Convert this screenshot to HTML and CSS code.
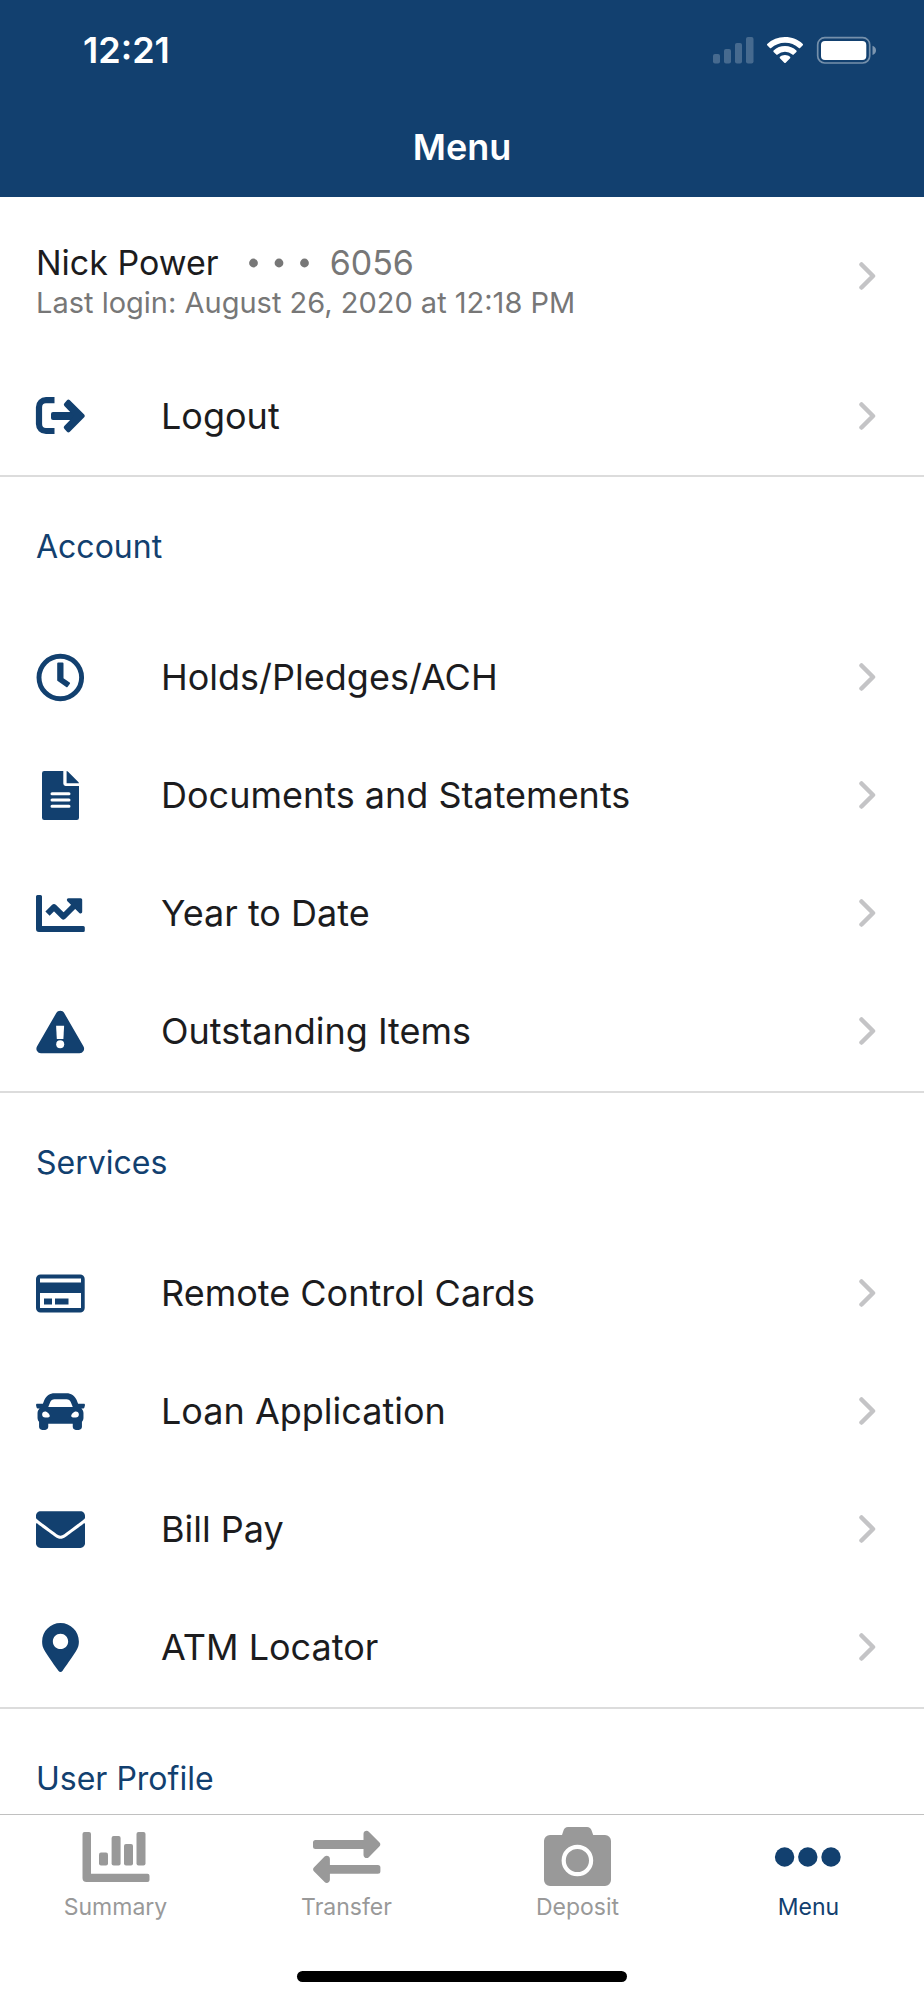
FILE: index.html
```html
<!DOCTYPE html>
<html lang="en">
<head>
<meta charset="utf-8">
<meta name="viewport" content="width=device-width, initial-scale=1">
<title>Menu</title>
<link rel="stylesheet" href="styles.css">
</head>
<body class="app">
<svg class="defs" aria-hidden="true">
  <symbol id="chevron" viewBox="0 0 17 28"><path d="M2.500 2.500 14 14 2.500 25.500" fill="none" stroke="currentColor" stroke-width="4.500" stroke-linecap="round" stroke-linejoin="round"/></symbol>
</svg>

<header class="header">
  <div class="status">
    <time class="clock">12:21</time>
    <svg class="status-icons" viewBox="23 16 163 28" aria-hidden="true" fill="#fff">
      <g opacity=".22"><rect x="23" y="34" width="7" height="9.500" rx="2"/><rect x="34" y="29" width="7" height="14.500" rx="2"/><rect x="45" y="23" width="7" height="20.500" rx="2"/><rect x="56" y="17" width="7.500" height="26.500" rx="2"/></g>
      <path d="M95 17c6.900 0 13.200 2.600 17.800 6.900.4.400.4 1 0 1.400l-2.700 2.700c-.4.400-.9.400-1.300 0A20.200 20.200 0 0 0 95 22.700c-5.300 0-10.100 2-13.800 5.300-.4.400-.9.400-1.300 0l-2.700-2.700c-.4-.4-.4-1 0-1.400A26 26 0 0 1 95 17zm0 9.100c4.400 0 8.400 1.700 11.400 4.400.4.400.4 1 0 1.400l-2.700 2.700c-.4.400-.9.400-1.300 0a11 11 0 0 0-14.800 0c-.4.400-.9.400-1.300 0l-2.700-2.700c-.4-.4-.4-1 0-1.400A17 17 0 0 1 95 26.100zm0 9c2 0 3.800.7 5.100 1.800.4.400.4.900 0 1.300l-4.400 4.500c-.4.400-1 .4-1.400 0l-4.400-4.500c-.4-.4-.4-.9 0-1.300 1.300-1.100 3.100-1.800 5.100-1.800z"/>
      <rect x="127.700" y="17.700" width="52" height="25.300" rx="7" fill="none" stroke="#fff" stroke-width="1.700" opacity=".42"/>
      <rect x="131" y="21" width="45.300" height="19" rx="4"/>
      <path d="M182.500 25.800c2.200.8 3.500 2.500 3.500 4.600s-1.300 3.800-3.500 4.600z" opacity=".45"/>
    </svg>
  </div>
  <h1 class="title">Menu</h1>
</header>

<main class="content">
  <section class="group">
    <a class="profile" href="#profile">
      <span class="profile-text">
        <span class="profile-name">Nick Power <span class="account-mask"><svg class="mask-dots" viewBox="0 0 60 10" role="img" aria-label="ending in"><g fill="currentColor"><circle cx="4.500" cy="5" r="4.400"/><circle cx="30" cy="5" r="4.400"/><circle cx="55.500" cy="5" r="4.400"/></g></svg>6056</span></span>
        <span class="last-login">Last login: August 26, 2020 at 12:18 PM</span>
      </span>
      <svg class="chevron" aria-hidden="true"><use href="#chevron"/></svg>
    </a>
    <a class="row" href="#logout">
      <svg class="icon" viewBox="16 12 49 49" aria-hidden="true"><path d="M34.500 20.200H26a7 7 0 0 0-7 7V44a7 7 0 0 0 7 7h8.500" fill="none" stroke="currentColor" stroke-width="6.200"/><path d="M33 32h21v8H33a2 2 0 0 1-2-2v-4a2 2 0 0 1 2-2z" fill="currentColor"/><path d="M44.400 23.300 47 20.200a2 2 0 0 1 2.600-.2L64.200 34.400a2 2 0 0 1 0 2.800L49.600 52a2 2 0 0 1-2.600-.2l-2.700-3a2 2 0 0 1 0-2.700L54 36l-9.600-10a2 2 0 0 1 0-2.700z" fill="currentColor"/></svg>
      <span class="label">Logout</span>
      <svg class="chevron" aria-hidden="true"><use href="#chevron"/></svg>
    </a>
  </section>

  <section class="group">
    <h2 class="group-title">Account</h2>
    <a class="row" href="#holds">
      <svg class="icon" viewBox="16 12.500 49 49" aria-hidden="true"><circle cx="40.300" cy="37" r="21.300" fill="none" stroke="currentColor" stroke-width="4.900"/><path d="M38.200 22h4.300a1 1 0 0 1 1 1v14.700l6.200 4.300a1 1 0 0 1 .2 1.300l-2.400 3.100a1 1 0 0 1-1.300.2l-8.500-6a1.500 1.500 0 0 1-.5-1.200V23a1 1 0 0 1 1-1z" fill="currentColor"/></svg>
      <span class="label">Holds/Pledges/ACH</span>
      <svg class="chevron" aria-hidden="true"><use href="#chevron"/></svg>
    </a>
    <a class="row" href="#documents">
      <svg class="icon" viewBox="16 131 49 49" aria-hidden="true"><path d="M24.200 131H43.300v12.600a2.300 2.300 0 0 0 2.300 2.300H59v31.800a2.200 2.200 0 0 1-2.200 2.200H24.200a2.200 2.200 0 0 1-2.200-2.200v-44.500a2.200 2.200 0 0 1 2.200-2.200zM46.600 131c.6 0 1.100.3 1.500.7l10.200 10.200c.4.400.7.900.7 1.400H46.600z" fill="currentColor"/><path d="M32 153.700h17M32 160h17M32 166.200h17" fill="none" stroke="#fff" stroke-width="3" stroke-linecap="round"/></svg>
      <span class="label">Documents and Statements</span>
      <svg class="chevron" aria-hidden="true"><use href="#chevron"/></svg>
    </a>
    <a class="row" href="#year-to-date">
      <svg class="icon" viewBox="16 9 49 49" aria-hidden="true"><path d="M17.500 15h3a1.500 1.500 0 0 1 1.500 1.500V46h41.300a1.500 1.500 0 0 1 1.500 1.500v3a1.500 1.500 0 0 1-1.500 1.500H19a3 3 0 0 1-3-3V16.500a1.500 1.500 0 0 1 1.500-1.500z" fill="currentColor"/><path d="M27.500 33.700 34 27.200l9.500 9.300L55.500 24.500" fill="none" stroke="currentColor" stroke-width="6" stroke-linejoin="round"/><path d="M48.600 18.300h12.100a1.500 1.500 0 0 1 1.500 1.500v12c0 1.800-1.900 2-2.900 1.100L47.400 21.200c-1-1-.6-2.900 1.200-2.900z" fill="currentColor"/></svg>
      <span class="label">Year to Date</span>
      <svg class="chevron" aria-hidden="true"><use href="#chevron"/></svg>
    </a>
    <a class="row" href="#outstanding">
      <svg class="icon" viewBox="16 126.500 49 49" aria-hidden="true"><path d="M36.300 132.500a4.600 4.600 0 0 1 7.900 0l19.200 33.300a4.600 4.600 0 0 1-4 7H21.100a4.600 4.600 0 0 1-4-7z" fill="currentColor"/><path d="M36.100 145.200h8l-.7 13.200h-6.600z" fill="#fff"/><circle cx="40.200" cy="163.700" r="4" fill="#fff"/></svg>
      <span class="label">Outstanding Items</span>
      <svg class="chevron" aria-hidden="true"><use href="#chevron"/></svg>
    </a>
  </section>

  <section class="group">
    <h2 class="group-title">Services</h2>
    <a class="row" href="#cards">
      <svg class="icon" viewBox="16 8.500 49 49" aria-hidden="true"><path d="M20.500 14h39.700a4.500 4.500 0 0 1 4.500 4.500v29a4.500 4.500 0 0 1-4.500 4.500H20.500a4.500 4.500 0 0 1-4.500-4.500v-29a4.500 4.500 0 0 1 4.500-4.500zM20 18v4h41v-4zM20 32.500v15h41v-15z" fill="currentColor" fill-rule="evenodd"/><path d="M24 38h8v6h-8zM35 38h13.500v6H35z" fill="currentColor"/></svg>
      <span class="label">Remote Control Cards</span>
      <svg class="chevron" aria-hidden="true"><use href="#chevron"/></svg>
    </a>
    <a class="row" href="#loan">
      <svg class="icon" viewBox="0 0 512 512" aria-hidden="true"><path fill="currentColor" d="M499.990 176h-59.870l-16.640-41.600C406.380 91.630 365.570 64 319.500 64h-127c-46.060 0-86.880 27.630-103.990 70.400L71.870 176H12.010C4.200 176-1.530 183.340.37 190.910l6 24C7.700 220.250 12.500 224 18.010 224h20.070C24.650 235.730 16 252.780 16 272v48c0 16.120 6.160 30.670 16 41.930V416c0 17.670 14.330 32 32 32h32c17.670 0 32-14.330 32-32v-32h256v32c0 17.670 14.330 32 32 32h32c17.670 0 32-14.330 32-32v-54.070c9.840-11.250 16-25.800 16-41.930v-48c0-19.220-8.650-36.270-22.070-48H494c5.510 0 10.310-3.750 11.640-9.090l6-24c1.890-7.570-3.840-14.910-11.650-14.910zm-352.060-17.830c7.290-18.220 24.940-30.170 44.570-30.170h127c19.630 0 37.280 11.950 44.570 30.170L384 208H128l19.930-49.830zM96 319.800c-19.200 0-32-12.760-32-31.900S76.800 256 96 256s48 28.710 48 47.850-28.800 15.950-48 15.950zm320 0c-19.200 0-48 3.190-48-15.950S396.800 256 416 256s32 12.760 32 31.900-12.800 31.900-32 31.900z"/></svg>
      <span class="label">Loan Application</span>
      <svg class="chevron" aria-hidden="true"><use href="#chevron"/></svg>
    </a>
    <a class="row" href="#bill-pay">
      <svg class="icon" viewBox="0 0 512 512" aria-hidden="true"><path fill="currentColor" d="M502.300 190.800c3.900-3.100 9.700-.2 9.700 4.700V400c0 26.500-21.500 48-48 48H48c-26.500 0-48-21.500-48-48V195.600c0-5 5.700-7.800 9.700-4.700 22.400 17.400 52.100 39.500 154.100 113.600 21.100 15.400 56.700 47.800 92.200 47.600 35.700.3 72-32.800 92.300-47.600 102-74.100 131.600-96.300 154-113.700zM256 320c23.200.4 56.600-29.200 73.400-41.400 132.700-96.300 142.800-104.700 173.400-128.700 5.800-4.500 9.200-11.500 9.200-18.900v-19c0-26.500-21.500-48-48-48H48c-26.500 0-48 21.500-48 48v19c0 7.400 3.400 14.300 9.200 18.900 30.600 23.900 40.700 32.400 173.400 128.700 16.800 12.200 50.200 41.800 73.400 41.400z"/></svg>
      <span class="label">Bill Pay</span>
      <svg class="chevron" aria-hidden="true"><use href="#chevron"/></svg>
    </a>
    <a class="row" href="#atm">
      <svg class="icon" viewBox="-64 0 512 512" aria-hidden="true"><path fill="currentColor" d="M172.268 501.670C26.970 291.031 0 269.413 0 192 0 85.961 85.961 0 192 0s192 85.961 192 192c0 77.413-26.970 99.031-172.268 309.670-9.535 13.774-29.930 13.773-39.464 0zM192 272c44.183 0 80-35.817 80-80s-35.817-80-80-80-80 35.817-80 80 35.817 80 80 80z"/></svg>
      <span class="label">ATM Locator</span>
      <svg class="chevron" aria-hidden="true"><use href="#chevron"/></svg>
    </a>
  </section>

  <section class="group">
    <h2 class="group-title">User Profile</h2>
  </section>
</main>

<footer class="footer">
  <nav class="tabs">
    <a class="tab" href="#summary">
      <svg class="tab-icon" viewBox="42 26 68 60" aria-hidden="true" fill="currentColor"><path d="M45 32h4a2 2 0 0 1 2 2v39.800h56.500a2 2 0 0 1 2 2v4.200a2 2 0 0 1-2 2H46.500a4 4 0 0 1-4-4V34a2 2 0 0 1 2-2z"/><rect x="59" y="52.500" width="9" height="13" rx="2"/><rect x="71.600" y="36" width="9" height="29.500" rx="2"/><rect x="84" y="44" width="9" height="21.500" rx="2"/><rect x="96.500" y="32" width="9" height="33.500" rx="2"/></svg>
      <span>Summary</span>
    </a>
    <a class="tab" href="#transfer">
      <svg class="tab-icon" viewBox="273 26 68 60" aria-hidden="true" fill="currentColor"><path id="arrow" d="M275.500 40h48v-6c0-2.800 3.300-4.200 5.300-2.300l10.500 10.600a3 3 0 0 1 0 4.200L328.800 57.200c-2 1.900-5.300.500-5.300-2.300v-6h-48a2.500 2.500 0 0 1-2.500-2.500v-3.900a2.500 2.500 0 0 1 2.500-2.500z"/><use href="#arrow" transform="rotate(180 306.700 56.900)"/></svg>
      <span>Transfer</span>
    </a>
    <a class="tab" href="#deposit">
      <svg class="tab-icon" viewBox="44 26 68 60" aria-hidden="true"><path d="M50 35h12l1.500-4.500A5 5 0 0 1 68 27h19a5 5 0 0 1 4.600 3.500L93.200 35H105a6 6 0 0 1 6 6v39a6 6 0 0 1-6 6H50a6 6 0 0 1-6-6V41a6 6 0 0 1 6-6z" fill="currentColor"/><circle cx="77.400" cy="60.500" r="13.700" fill="none" stroke="#fff" stroke-width="4.200"/></svg>
      <span>Deposit</span>
    </a>
    <a class="tab tab-active" href="#menu" aria-current="page">
      <svg class="tab-icon" viewBox="275 26 68 60" aria-hidden="true" fill="currentColor"><circle cx="284.600" cy="57" r="9.700"/><circle cx="307.800" cy="57" r="9.700"/><circle cx="331" cy="57" r="9.700"/></svg>
      <span>Menu</span>
    </a>
  </nav>
  <div class="home-indicator"></div>
</footer>
</body>
</html>
```
FILE: styles.css
```css
* {
  box-sizing: border-box;
}

.app {
  display: flex;
  flex-direction: column;
  height: 100vh;
  margin: 0;
  background: #fff;
  color: #1c1c1e;
  font-family: Inter, "Liberation Sans", sans-serif;
}

.defs {
  display: none;
}

a {
  color: inherit;
  text-decoration: none;
}

svg {
  flex: none;
  overflow: visible;
}

.header {
  flex: none;
  background: #12406f;
  color: #fff;
}

.status {
  display: flex;
  align-items: center;
  justify-content: space-between;
  height: 100px;
  padding: 0 48px 0 83px;
}

.clock {
  font-size: 36px;
  font-weight: 600;
}

.status-icons {
  width: 163px;
  height: 28px;
}

.title {
  margin: 0;
  padding-bottom: 2px;
  font-size: 36px;
  font-weight: 600;
  line-height: 95px;
  text-align: center;
}

.content {
  flex: 1;
  min-height: 0;
  overflow-y: auto;
  scrollbar-width: none;
}

.group {
  padding-bottom: 1px;
  border-bottom: 2px solid #dcdcdc;
}

.group:first-child {
  padding-bottom: 0;
}

.profile {
  display: flex;
  align-items: center;
  justify-content: space-between;
  height: 160px;
  padding: 0 48px 2px 36px;
}

.profile-text {
  display: flex;
  flex-direction: column;
  padding-top: 10px;
}

.profile-name {
  display: flex;
  gap: 30px;
  font-size: 34px;
  line-height: 44px;
}

.account-mask {
  display: flex;
  align-items: center;
  gap: 21px;
  color: #777;
}

.mask-dots {
  width: 60px;
  height: 10px;
}

.last-login {
  color: #777;
  font-size: 29px;
  line-height: 36px;
}

.row {
  display: grid;
  grid-template-columns: 49px 1fr auto;
  column-gap: 76px;
  align-items: center;
  height: 118px;
  padding: 0 48px 0 36px;
}

.icon {
  width: 49px;
  height: 49px;
  color: #12406f;
}

.label {
  font-size: 36px;
}

.chevron {
  width: 17px;
  height: 28px;
  color: #c4c4c6;
}

.group-title {
  margin: 0;
  padding: 0 36px 2px;
  color: #12406f;
  font-size: 32px;
  font-weight: 400;
  line-height: 139px;
}

.footer {
  flex: none;
  padding-bottom: 18px;
  border-top: 1px solid #c0c0c0;
  background: #fff;
}

.tabs {
  display: grid;
  grid-template-columns: repeat(4, 1fr);
  padding: 11px 0 50px;
}

.tab {
  display: flex;
  flex-direction: column;
  align-items: center;
  gap: 7px;
  color: #999;
  font-size: 23px;
  font-weight: 400;
  line-height: 28px;
}

.tab-active {
  color: #12406f;
}

.tab-icon {
  width: 68px;
  height: 60px;
}

.home-indicator {
  width: 330px;
  height: 11px;
  margin: 0 auto;
  border-radius: 6px;
  background: #000;
}
```
